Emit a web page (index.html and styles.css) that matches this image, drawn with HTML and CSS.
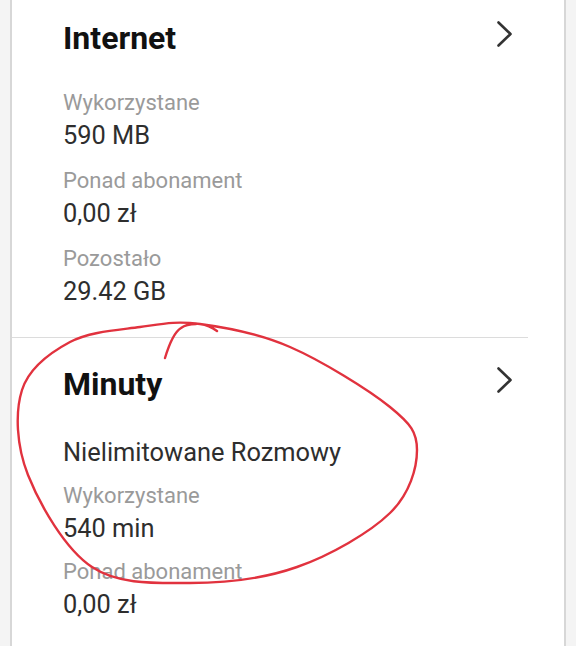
FILE: index.html
```html
<!DOCTYPE html>
<html lang="pl">
<head>
<meta charset="utf-8">
<title>Usage</title>
<link rel="stylesheet" href="styles.css">
</head>
<body>
<div class="card">
  <section class="section">
    <div class="header">
      <h2 class="title">Internet</h2>
      <svg class="chevron" width="18" height="26" viewBox="0 0 18 26"><path d="M2.5 1.5 L14.5 13 L2.5 24.5" fill="none" stroke="#333" stroke-width="2.6" stroke-linecap="round" stroke-linejoin="round"/></svg>
    </div>
    <div class="fields">
      <div class="field"><div class="label">Wykorzystane</div><div class="value">590 MB</div></div>
      <div class="field"><div class="label">Ponad abonament</div><div class="value">0,00 zł</div></div>
      <div class="field"><div class="label">Pozostało</div><div class="value">29.42 GB</div></div>
    </div>
  </section>
  <section class="section section--next">
    <div class="header">
      <h2 class="title">Minuty</h2>
      <svg class="chevron" width="18" height="26" viewBox="0 0 18 26"><path d="M2.5 1.5 L14.5 13 L2.5 24.5" fill="none" stroke="#333" stroke-width="2.6" stroke-linecap="round" stroke-linejoin="round"/></svg>
    </div>
    <div class="fields fields--alt">
      <div class="value">Nielimitowane Rozmowy</div>
      <div class="field"><div class="label">Wykorzystane</div><div class="value">540 min</div></div>
      <div class="field"><div class="label">Ponad abonament</div><div class="value">0,00 zł</div></div>
    </div>
  </section>
</div>
<svg class="scribble" width="576" height="646" viewBox="0 0 576 646">
  <path fill="none" stroke="#e1323e" stroke-width="2.4" stroke-linecap="round" stroke-linejoin="round"
    d="M200 324
       C225 327.3 258.3 333.2 290 347
       C321.7 360.8 368.8 389.8 390 407
       C411.2 424.2 417 432.3 417 450
       C417 467.7 410 493.5 390 513
       C370 532.5 330.3 555.3 297 567
       C263.7 578.7 224.2 583 190 583
       C155.8 583 119 585 92 567
       C65 549 39.7 504.5 28 475
       C16.3 445.5 15 412.2 22 390
       C29 367.8 50.3 352.5 70 342
       C89.7 331.5 118.3 330 140 327
       C161.7 324 175 320.7 200 324
       C208 325 213 328 217 331"/>
  <path fill="none" stroke="#e1323e" stroke-width="2.4" stroke-linecap="round" stroke-linejoin="round"
    d="M165 358 C168 348 173 333 181 328 C185 325 190 324 196 324"/>
</svg>
</body>
</html>
```

FILE: styles.css
```css
html, body {
  margin: 0;
  padding: 0;
}

body {
  position: relative;
  background: #f4f4f4;
  font-family: Roboto, "Noto Sans", "Liberation Sans", sans-serif;
  width: 576px;
  height: 646px;
  overflow: hidden;
}

.card {
  margin: 0 10px;
  min-height: 646px;
  background: #ffffff;
  border-left: 2px solid #d7d7d7;
  border-right: 2px solid #d7d7d7;
}

.section {
  margin-right: 36px;
  padding: 18px 14px 29px 51px;
  border-bottom: 1px solid #dcdcdc;
}

.section--next {
  padding-top: 26px;
  border-bottom: none;
}

.header {
  display: flex;
  justify-content: space-between;
  align-items: flex-start;
  height: 40px;
}

.title {
  margin: 0;
  font-size: 32px;
  line-height: 40px;
  font-weight: 700;
  color: #111111;
}

.chevron {
  margin-top: 3px;
}

.fields {
  display: flex;
  flex-direction: column;
  gap: 14px;
  margin-top: 30px;
}

.fields--alt {
  margin-top: 31px;
  gap: 12px;
}

.label {
  font-size: 22px;
  line-height: 30px;
  color: #9a9a9a;
}

.value {
  font-size: 25.4px;
  line-height: 34px;
  color: #2e2e2e;
}

.scribble {
  position: absolute;
  left: 0;
  top: 0;
  pointer-events: none;
}
```
